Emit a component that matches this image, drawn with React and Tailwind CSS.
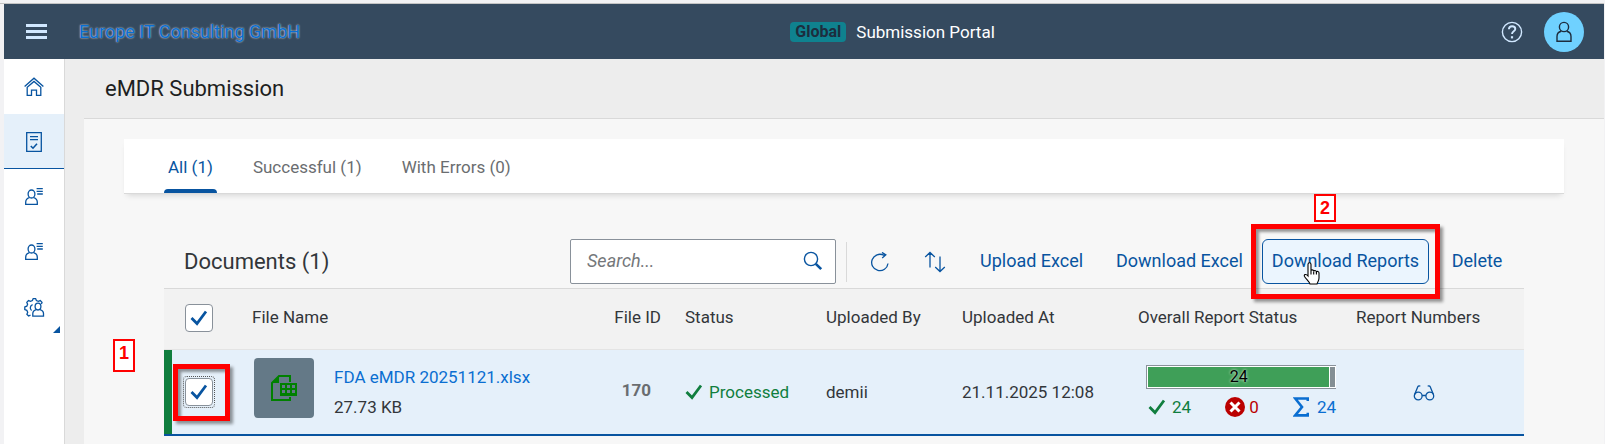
import React, { useState } from 'react';

const tabs = [
  { id: 'all', label: 'All (1)' },
  { id: 'successful', label: 'Successful (1)' },
  { id: 'errors', label: 'With Errors (0)' },
];

const documents = [
  {
    id: 170,
    name: 'FDA eMDR 20251121.xlsx',
    size: '27.73 KB',
    status: 'Processed',
    uploadedBy: 'demii',
    uploadedAt: '21.11.2025 12:08',
    success: 24,
    errors: 0,
    total: 24,
    progress: 97,
  },
];

const HomeIcon = () => (
  <svg width="20" height="20" viewBox="0 0 20 20" fill="none" stroke="currentColor" strokeWidth="1.3">
    <path d="M.6 9.6 10 1.2l9.4 8.4" />
    <path d="M3.2 10.2V18.3h4.3v-5.2h5v5.2h4.3v-8.1L10 4.4z" />
  </svg>
);

const DocumentIcon = () => (
  <svg width="20" height="20" viewBox="0 0 20 20" fill="none" stroke="currentColor" strokeWidth="1.3">
    <path d="M2.7.7h14.6v18.6H2.7zM6 4.7h8M6 7.7h8" />
    <path d="m6.8 14 2.2 2.2 4-4.4" strokeWidth="1.6" />
  </svg>
);

const ContactIcon = () => (
  <svg width="20" height="20" viewBox="0 0 20 20" fill="none" stroke="currentColor" strokeWidth="1.3">
    <ellipse cx="7.5" cy="7" rx="3.4" ry="4" />
    <path d="M5.4 10.6C2.8 11.4 1.7 13 1.7 15.2v2.1h11.6v-2.1c0-2.2-1.1-3.8-3.7-4.6M12.6 1.6h6.2M12.6 4.3h6.2M13.2 7h5.6" />
  </svg>
);

const UserSettingsIcon = () => (
  <svg width="22" height="22" viewBox="0 0 22 22" fill="none" stroke="currentColor" strokeWidth="1.3">
    <path d="M7.5 19.2 5.6 20l-1.7-1.7.8-2-.9-2-2-.8V11l2-.8.8-1.9-.8-2L5.5 4.6l2 .8 1.9-.8.8-2h2.4l.8 2 1.9.8 2-.8L19 6.3l-.6 1.6" />
    <path d="M8.6 14.6a3.5 3.5 0 0 1 1-6" />
    <ellipse cx="15" cy="10.6" rx="2.9" ry="3.4" />
    <path d="M13.3 13.6c-2.3.7-3.5 2-3.5 4v2.6h10.7v-2.6c0-2-1.2-3.3-3.6-4" />
  </svg>
);

const HelpIcon = () => (
  <svg width="22" height="22" viewBox="0 0 22 22" fill="none" stroke="currentColor">
    <circle cx="11" cy="11" r="9.6" strokeWidth="1.4" />
    <path d="M7.9 8.2c.1-1.9 1.4-2.9 3.2-2.9s3.2 1 3.2 2.7c0 2.4-3.3 2.3-3.3 5" strokeWidth="1.9" />
    <path d="M9.9 15.2h2.2v2.2H9.9z" fill="currentColor" stroke="none" />
  </svg>
);

const PersonIcon = () => (
  <svg width="20" height="22" viewBox="0 0 20 22" fill="none" stroke="currentColor" strokeWidth="1.4">
    <circle cx="10" cy="6" r="4.6" />
    <path d="M7.2 10.2C4 11 3 13 3 15.5v4.8h14v-4.8c0-2.5-1-4.5-4.2-5.3" />
  </svg>
);

const SearchIcon = () => (
  <svg width="20" height="20" viewBox="0 0 20 20" fill="none" stroke="currentColor">
    <circle cx="8" cy="8" r="6.6" strokeWidth="1.4" />
    <path d="m12.8 12.8 5.4 5.4" strokeWidth="2.6" />
  </svg>
);

const RefreshIcon = () => (
  <svg width="20" height="20" viewBox="0 0 20 20" fill="none" stroke="currentColor" strokeWidth="1.3">
    <path d="M18 11.5a8.2 8.2 0 1 1-4.2-8.2l1.8-.4M12 .4l3.800 2.500-3.600 3" />
  </svg>
);

const SortIcon = () => (
  <svg width="22" height="22" viewBox="0 0 22 22" fill="none" stroke="currentColor" strokeWidth="1.3">
    <path d="M6 16.5V1.7M1.2 6 6 1.5 10.8 6M16 5.5v14.8M11.2 16l4.8 4.5 4.8-4.5" />
  </svg>
);

const CheckIcon = () => (
  <svg width="18" height="16" viewBox="0 0 18 16" fill="none" stroke="currentColor" strokeWidth="2.8">
    <path d="M1.5 8 7 13.5 16 1.5" />
  </svg>
);

const ErrorIcon = () => (
  <svg width="20" height="20" viewBox="0 0 20 20">
    <circle cx="10" cy="10" r="10" fill="currentColor" />
    <path d="m5.5 5.5 9 9m0-9-9 9" stroke="#fff" strokeWidth="3" />
  </svg>
);

const SumIcon = () => (
  <svg width="16" height="20" viewBox="0 0 16 20" fill="none" stroke="currentColor" strokeWidth="2.6">
    <path d="M14.8 4V1.5H2.2L9 10l-6.8 8.4h12.600V15.800" />
  </svg>
);

const GlassesIcon = () => (
  <svg width="22" height="16" viewBox="0 0 22 16" fill="none" stroke="currentColor" strokeWidth="1.3">
    <circle cx="5.2" cy="11" r="3.9" />
    <circle cx="16.8" cy="11" r="3.9" />
    <path d="M9.1 10.5h3.8M1.6 9.5 4.8 1.7c.4-.9 1.4-.9 2.500-.6M20.400 9.500 17.200 1.700c-.4-.9-1.400-.9-2.500-.6" />
  </svg>
);

const SpreadsheetIcon = () => (
  <svg width="26" height="26" viewBox="0 0 26 26">
    <path d="M19 7V1H8L1 8v17h18v-3" fill="none" stroke="currentColor" strokeWidth="2" />
    <path d="M1 8 8 1v7z" fill="currentColor" />
    <path d="M9 8h17v13H9z" fill="currentColor" />
    <path d="M11 10h3v3h-3zM16 10h3v3h-3zM21 10h3v3h-3zM11 15h3v3h-3zM16 15h3v3h-3zM21 15h3v3h-3z" fill="#647987" />
  </svg>
);

const HandCursor = () => (
  <svg width="18" height="23" viewBox="0 0 18 23" fill="#fff" stroke="#000" strokeWidth="1.1">
    <path d="M5 14V2.500C5 .2 8 .2 8 2.500V9c0-1.500 2.500-1.500 2.700.3C11 8 13.200 8.200 13.400 10c.5-1 2.600-.8 2.600 1v5c0 3-1.500 4-2 6H7c-.5-2-3.500-4.500-5.500-7.500C.5 12.500 3 11.500 5 14z" />
    <path d="M8 9v3.500M10.700 9.500v3M13.400 10v2.500" />
  </svg>
);

const Checkbox = ({ label, checked, onChange, focused }) => (
  <label className={`grid size-8 place-items-center rounded border border-dotted ${focused ? 'border-[#555]' : 'border-transparent'}`}>
    <input
      type="checkbox"
      aria-label={label}
      checked={checked}
      onChange={onChange}
      className="col-start-1 row-start-1 h-7 w-7 appearance-none rounded-sm border border-[#89919a] bg-white"
    />
    {checked && (
      <span className="pointer-events-none col-start-1 row-start-1 text-[#0854a0]">
        <CheckIcon />
      </span>
    )}
  </label>
);

const Badge = ({ children, tall }) => (
  <span
    className={`flex justify-center border-2 border-[#f00] bg-white px-1 font-['Liberation_Sans',sans-serif] text-lg leading-6 font-bold text-[#f00] ${
      tall ? 'h-[33px]' : 'h-7'
    }`}
  >
    {children}
  </span>
);

const Sidebar = () => {
  const items = [
    { label: 'Home', icon: <HomeIcon /> },
    { label: 'eMDR Submission', icon: <DocumentIcon />, active: true },
    { label: 'Contacts', icon: <ContactIcon /> },
    { label: 'Partners', icon: <ContactIcon /> },
    { label: 'User Settings', icon: <UserSettingsIcon />, expandable: true },
  ];

  return (
    <nav className="w-[61px] shrink-0 border-r border-[#d9d9d9] bg-white text-[#0854a0]">
      {items.map((item) => (
        <a
          key={item.label}
          href="#"
          aria-label={item.label}
          className={`relative flex h-[55px] items-center justify-center border-b pt-[2px] ${
            item.active ? 'border-[#0854a0] bg-[#e5f0fa]' : 'border-transparent'
          }`}
        >
          {item.icon}
          {item.expandable && (
            <svg className="absolute right-1 bottom-0" width="7" height="7" viewBox="0 0 7 7">
              <path d="M7 0v7H0z" fill="currentColor" />
            </svg>
          )}
        </a>
      ))}
    </nav>
  );
};

const App = () => {
  const [activeTab, setActiveTab] = useState('all');
  const [selected, setSelected] = useState([170]);
  const [query, setQuery] = useState('');

  const allSelected = selected.length === documents.length;

  const toggle = (id) => {
    setSelected(selected.includes(id) ? selected.filter((s) => s !== id) : [...selected, id]);
  };

  return (
    <div className="flex min-h-screen flex-col overflow-hidden bg-[#f2f2f4] pr-px pl-1 font-[Roboto,sans-serif] text-[17px] leading-6 text-[#32363a]">
      <div className="-ml-1 h-1 border-b border-[#c4c4c4]" />
      <header className="flex h-[55px] items-center justify-between bg-[#354a5f] pr-5 pl-[22px]">
        <div className="flex items-center gap-8">
          <button type="button" aria-label="Menu" className="flex w-[21px] flex-col gap-[3px]">
            <span className="h-[3px] bg-[#d1e8ff]" />
            <span className="h-[3px] bg-[#d1e8ff]" />
            <span className="h-[3px] bg-[#d1e8ff]" />
          </button>
          <a href="#" className="text-lg text-[#0a6ed1] [text-shadow:0_0_2px_#fff]">Europe IT Consulting GmbH</a>
        </div>
        <div className="mr-4 flex items-center gap-[10px]">
          <span className="rounded bg-[#0f828f] px-[5px] text-base leading-5 font-bold text-[#1d2d3e]">Global</span>
          <span className="text-white">Submission Portal</span>
        </div>
        <div className="flex items-center gap-[21px]">
          <button type="button" aria-label="Help" className="text-[#d1e8ff]">
            <HelpIcon />
          </button>
          <button type="button" aria-label="Profile" className="flex size-10 items-center justify-center rounded-full bg-[#6fd1ff] text-[#1d2d3e]">
            <PersonIcon />
          </button>
        </div>
      </header>

      <div className="flex flex-1">
        <Sidebar />
        <main className="flex min-w-0 flex-1 flex-col bg-[#ededed]">
          <h1 className="pt-[18px] pb-[17px] pl-10 text-[22px] text-[#1d1f21]">eMDR Submission</h1>
          <div className="ml-[19px] flex-1 border-t border-[#d9d9d9] bg-[#f7f7f7] px-10 pt-5">
            <div role="tablist" className="flex h-[55px] gap-8 border-b border-[#d9d9d9] bg-white pl-10 shadow-[0_4px_6px_-3px_rgba(0,0,0,0.15)]">
              {tabs.map((tab) => (
                <button
                  key={tab.id}
                  type="button"
                  role="tab"
                  aria-selected={activeTab === tab.id}
                  onClick={() => setActiveTab(tab.id)}
                  className={`flex flex-col justify-between ${activeTab === tab.id ? 'text-[#0854a0]' : 'text-[#6a6d70]'}`}
                >
                  <span className="px-1 pt-4">{tab.label}</span>
                  <span className={`h-1 w-full rounded-t-sm ${activeTab === tab.id ? 'bg-[#0854a0]' : ''}`} />
                </button>
              ))}
            </div>

            <section className="px-10 pt-[45px]">
              <div className="flex h-[49px] items-start">
                <h2 className="pt-[11px] pl-5 text-[22px] leading-6">Documents (1)</h2>
                <div className="ml-auto flex h-[45px] items-center text-lg leading-6 text-[#0854a0]">
                  <div className="flex h-full w-[266px] items-center rounded-xs border border-[#89919a] bg-white pr-3 pb-[2px] pl-4">
                    <input
                      type="search"
                      aria-label="Search"
                      placeholder="Search..."
                      value={query}
                      onChange={(e) => setQuery(e.target.value)}
                      className="min-w-0 flex-1 bg-transparent outline-none placeholder:text-[#74777a] placeholder:italic"
                    />
                    <button type="button" aria-label="Run search">
                      <SearchIcon />
                    </button>
                  </div>
                  <span className="mr-[23px] ml-[10px] h-10 w-px bg-[#d9d9d9]" />
                  <button type="button" aria-label="Refresh" className="mr-[34px]">
                    <RefreshIcon />
                  </button>
                  <button type="button" aria-label="Sort" className="mr-[34px]">
                    <SortIcon />
                  </button>
                  <button type="button" className="w-[101px] pb-[2px] whitespace-nowrap">Upload Excel</button>
                  <button type="button" className="ml-[35px] w-[124px] pb-[2px] whitespace-nowrap">Download Excel</button>
                  <div className="relative ml-[22px] h-full">
                    <button type="button" className="h-full w-[167px] rounded-md border border-[#0854a0] bg-[#ebf5fe] pb-[2px] whitespace-nowrap">
                      Download Reports
                    </button>
                    <div className="pointer-events-none absolute -inset-x-[11px] -inset-y-[15px] border-[5px] border-[#f00] shadow-[3px_3px_3px_rgba(0,0,0,0.4),inset_3px_3px_3px_rgba(0,0,0,0.4)]" />
                    <div className="absolute -top-[45px] left-[52px]">
                      <Badge>2</Badge>
                    </div>
                    <div className="pointer-events-none absolute top-[23px] left-[41px]">
                      <HandCursor />
                    </div>
                  </div>
                  <button type="button" className="mr-[21px] ml-[22px] w-[52px] pb-[2px]">Delete</button>
                </div>
              </div>

              <table className="w-full table-fixed border-t border-[#d9d9d9] text-left">
                <colgroup>
                  <col className="w-20" />
                  <col />
                  <col className="w-[90px]" />
                  <col className="w-[141px]" />
                  <col className="w-[136px]" />
                  <col className="w-[176px]" />
                  <col className="w-[218px]" />
                  <col className="w-[176px]" />
                </colgroup>
                <thead>
                  <tr className="h-[61px] border-b border-[#e4e4e4] bg-[#f2f2f2]">
                    <th className="pb-[2px] pl-[19px]">
                      <Checkbox
                        label="Select all documents"
                        checked={allSelected}
                        onChange={() => setSelected(allSelected ? [] : documents.map((d) => d.id))}
                      />
                    </th>
                    <th className="px-2 pb-1 font-normal">File Name</th>
                    <th className="pr-4 pb-1 text-right font-normal">File ID</th>
                    <th className="px-2 pb-1 font-normal">Status</th>
                    <th className="px-2 pb-1 font-normal">Uploaded By</th>
                    <th className="px-2 pb-1 font-normal">Uploaded At</th>
                    <th className="px-2 pb-1 font-normal">Overall Report Status</th>
                    <th className="px-2 pb-1 font-normal">Report Numbers</th>
                  </tr>
                </thead>
                <tbody>
                  {documents.map((doc) => (
                    <tr key={doc.id} className="h-[85px] border-b-2 border-[#0854a0] bg-[#e5f0fa]">
                      <td className="pl-[19px] shadow-[inset_8px_0_0_#107e3e]">
                        <div className="relative w-8">
                          <Checkbox
                            label={`Select ${doc.name}`}
                            checked={selected.includes(doc.id)}
                            onChange={() => toggle(doc.id)}
                            focused
                          />
                          <div className="pointer-events-none absolute -top-3 -left-[10px] size-[57px] border-[5px] border-[#f00] shadow-[3px_3px_3px_rgba(0,0,0,0.4),inset_3px_3px_3px_rgba(0,0,0,0.4)]" />
                          <div className="absolute -top-[37px] -left-[70px]">
                            <Badge tall>1</Badge>
                          </div>
                        </div>
                      </td>
                      <td className="px-2 pt-2 align-top">
                        <div className="flex items-start gap-5 pl-[2px]">
                          <div className="flex size-[60px] items-center justify-center rounded bg-[#647987] text-[#008000]">
                            <SpreadsheetIcon />
                          </div>
                          <div className="flex flex-col gap-[6px] pt-[7px]">
                            <a href="#" className="text-[#0a6ed1]">{doc.name}</a>
                            <span>{doc.size}</span>
                          </div>
                        </div>
                      </td>
                      <td className="pr-[26px] pb-1 text-right font-bold text-[#6a6d70]">{doc.id}</td>
                      <td className="px-2 text-[#107e3e]">
                        <span className="flex items-center gap-[6px]">
                          <CheckIcon />
                          {doc.status}
                        </span>
                      </td>
                      <td className="px-2">{doc.uploadedBy}</td>
                      <td className="px-2">{doc.uploadedAt}</td>
                      <td className="pr-3 pl-4">
                        <div className="flex h-6 border border-r-0 border-[#89919a] bg-white p-px text-base leading-5 text-black">
                          <div className="bg-[#3f9f58] text-center [text-shadow:0_0_3px_#fff]" style={{ width: `${doc.progress}%` }}>
                            {doc.success}
                          </div>
                          <div className="ml-px flex-1 bg-[#848f94]" />
                        </div>
                        <div className="mt-[6px] flex items-center justify-between pl-[2px]">
                          <span className="flex items-center gap-[6px] text-[#107e3e]">
                            <CheckIcon />
                            {doc.success}
                          </span>
                          <span className="flex items-center gap-1 text-[#bb0000]">
                            <ErrorIcon />
                            {doc.errors}
                          </span>
                          <span className="flex items-center gap-2 text-[#0a6ed1]">
                            <SumIcon />
                            {doc.total}
                          </span>
                        </div>
                      </td>
                      <td className="pr-6 text-center">
                        <button type="button" aria-label="Show report numbers" className="align-middle text-[#0854a0]">
                          <GlassesIcon />
                        </button>
                      </td>
                    </tr>
                  ))}
                </tbody>
              </table>
            </section>
          </div>
        </main>
      </div>
    </div>
  );
};

export default App;
